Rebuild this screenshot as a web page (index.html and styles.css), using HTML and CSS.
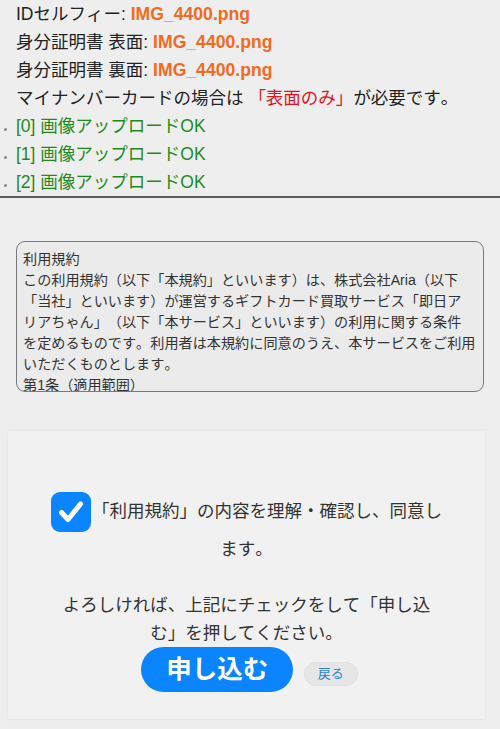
FILE: index.html
```html
<!DOCTYPE html>
<html lang="ja">
<head>
<meta charset="utf-8">
<link rel="stylesheet" href="styles.css">
</head>
<body>
<div class="status">
  <ul class="files">
    <li class="plain">IDセルフィー: <b class="fname">IMG_4400.png</b></li>
    <li class="plain">身分証明書 表面: <b class="fname">IMG_4400.png</b></li>
    <li class="plain">身分証明書 裏面: <b class="fname">IMG_4400.png</b></li>
    <li class="plain">マイナンバーカードの場合は <span class="red">「表面のみ」</span>が必要です。</li>
    <li class="ok">[0] 画像アップロードOK</li>
    <li class="ok">[1] 画像アップロードOK</li>
    <li class="ok">[2] 画像アップロードOK</li>
  </ul>
</div>

<div class="terms">
  <div class="terms-text">利用規約<br>この利用規約（以下「本規約」といいます）は、株式会社Aria（以下<br>「当社」といいます）が運営するギフトカード買取サービス「即日ア<br>リアちゃん」（以下「本サービス」といいます）の利用に関する条件<br>を定めるものです。利用者は本規約に同意のうえ、本サービスをご利用<br>いただくものとします。<br>第1条（適用範囲）<br>本規約は、本サービスの利用に関する一切の関係に適用されます。</div>
</div>

<div class="agree-box">
  <label class="agree">
    <span class="check"><svg viewBox="0 0 40 40" width="40" height="40"><path d="M10.5 20.5 L17 27.5 L29.5 12" fill="none" stroke="#fff" stroke-width="5" stroke-linecap="round" stroke-linejoin="round"/></svg></span>「利用規約」の内容を理解・確認し、同意します。
  </label>
  <p class="note">よろしければ、上記にチェックをして「申し込む」を押してください。</p>
  <div class="actions">
    <span class="submit">申し込む</span>
    <span class="back">戻る</span>
  </div>
</div>
</body>
</html>
```

FILE: styles.css
```css
html, body {
  margin: 0;
  padding: 0;
  background: #eeeeee;
}
body {
  font-family: "Liberation Sans", "Noto Sans CJK JP", sans-serif;
  color: #222;
  width: 500px;
  height: 729px;
  overflow: hidden;
  text-spacing-trim: space-all;
  font-kerning: none;
  font-feature-settings: "palt" 0, "kern" 0;
}
.status {
  border-bottom: 2px solid #5c5c5c;
}
.files {
  margin: 0;
  padding: 0 0 0 16px;
  list-style: none;
  font-size: 17.5px;
  line-height: 28px;
}
.files li {
  white-space: nowrap;
  height: 28px;
}
.files li.ok {
  list-style: disc;
  color: #1f8a22;
}
.files li.ok::marker {
  color: #888;
  font-size: 9px;
}
.fname {
  color: #f26a1c;
  font-weight: bold;
  font-size: 17.6px;
  line-height: 18px;
}
.red {
  color: #e3131c;
}
.terms {
  margin: 43px 16px 0 16px;
  height: 149px;
  border: 1px solid #7a7a7a;
  border-radius: 9px;
  background: #ebebeb;
  overflow: hidden;
}
.terms-text {
  padding: 7px 6px 0 6px;
  font-size: 14.15px;
  line-height: 21px;
  color: #333;
  white-space: nowrap;
}
.agree-box {
  margin: 39px 15px 0 8px;
  height: 288px;
  background: #f1f1f1;
  box-shadow: 0 0 3px rgba(0, 0, 0, 0.06);
  padding-top: 61px;
  box-sizing: border-box;
  text-align: center;
}
.agree {
  display: block;
  width: 404px;
  margin: 0 auto;
  font-size: 17.5px;
  line-height: 35px;
  color: #333;
}
.check {
  display: inline-block;
  width: 40px;
  height: 40px;
  background: #0b84ff;
  border-radius: 9px;
  vertical-align: middle;
  margin-right: 1px;
}
.check svg {
  display: block;
}
.note {
  width: 392px;
  margin: 24px auto 0 auto;
  font-size: 17.5px;
  line-height: 28px;
  color: #333;
}
.actions {
  margin-top: 0;
  padding-left: 6px;
}
.submit {
  display: inline-block;
  width: 152px;
  height: 45px;
  line-height: 45px;
  border-radius: 23px;
  background: #0b84ff;
  color: #fff;
  font-size: 25.5px;
  font-weight: bold;
}
.back {
  display: inline-block;
  width: 52px;
  height: 22px;
  line-height: 22px;
  margin-left: 6px;
  border: 1px solid #e0e0e0;
  border-radius: 12px;
  background: #e6e6e6;
  color: #2c7fd6;
  font-size: 13px;
}
```
